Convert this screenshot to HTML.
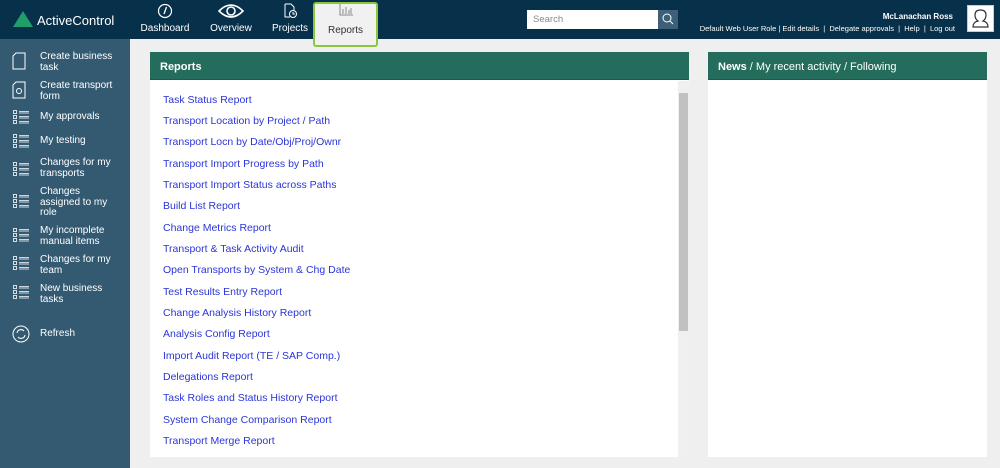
<!DOCTYPE html>
<html><head><style>
*{margin:0;padding:0;box-sizing:border-box}
body{width:1000px;height:468px;overflow:hidden;background:#efefef;font-family:"Liberation Sans",Arial,sans-serif;position:relative}
.hdr{position:absolute;left:0;top:0;width:1000px;height:39px;background:#07304a}
.logo{position:absolute;left:13px;top:11px;color:#fff;font-size:13px}
.logo span{position:absolute;left:24px;top:2px;white-space:nowrap}
.nav{position:absolute;top:0;height:39px;color:#fff;font-size:10px;text-align:center}
.nav .l{position:absolute;top:23px;left:0;right:0}
.side{position:absolute;left:0;top:39px;width:130px;height:429px;background:#345a72}
.it{position:absolute;left:40px;color:#fff;font-size:10px;line-height:10.5px;width:78px}
.ic{position:absolute;left:12px}
.panel{position:absolute;background:#fff}
.ph{height:28px;background:#246d5c;color:#fff;font-size:11px;padding:9px 10px 0;border-bottom:1px solid #1d5a4b}
.links a{position:absolute;left:13px;color:#2b35d8;font-size:10.5px;text-decoration:none;white-space:nowrap}
</style></head><body>
<div class="hdr">
<div class="logo"><svg width="20" height="16" viewBox="0 0 20 16"><polygon points="10,0 20,16 0,16" fill="#1f9e6a"/></svg><span>ActiveControl</span></div>
<div class="nav" style="left:140px;width:50px"><svg width="16" height="16" style="margin-top:3px" viewBox="0 0 16 16"><circle cx="8" cy="8" r="6.5" fill="none" stroke="#fff" stroke-width="1.2"/><path d="M9.5 4 L7 11" stroke="#fff" stroke-width="1.3"/></svg><div class="l">Dashboard</div></div>
<div class="nav" style="left:207px;width:48px"><svg width="26" height="16" style="margin-top:3px" viewBox="0 0 26 16"><path d="M1 8 Q13 -4 25 8 Q13 20 1 8Z" fill="none" stroke="#fff" stroke-width="1.6"/><circle cx="13" cy="8" r="4" fill="none" stroke="#fff" stroke-width="1.6"/></svg><div class="l">Overview</div></div>
<div class="nav" style="left:270px;width:40px"><svg width="16" height="17" style="margin-top:2px" viewBox="0 0 16 17"><path d="M3 2h6l3 3v3M3 2v13h5" fill="none" stroke="#fff" stroke-width="1"/><circle cx="11" cy="12" r="3.5" fill="none" stroke="#fff"/><path d="M11 10v2h2" stroke="#fff" fill="none"/></svg><div class="l">Projects</div></div>
<div class="nav" style="left:313px;width:65px;height:45px;top:2px;background:#f1f1f1;border:2px solid #8cc63f;border-radius:3px;color:#333"><svg width="14" height="12" viewBox="0 0 14 12"><path d="M1 0v11h13M4 10V5M7 10V3M10 10V6M12 10V4" stroke="#8a8a8a" fill="none"/></svg><div class="l" style="top:21px">Reports</div></div>
<div style="position:absolute;left:527px;top:10px;width:131px;height:19px;background:#fff;font-size:9.5px;color:#888;padding:4px 6px">Search</div>
<div style="position:absolute;left:658px;top:10px;width:20px;height:19px;background:#3d5f78"><svg width="20" height="19" viewBox="0 0 20 19"><circle cx="9" cy="8" r="4" fill="none" stroke="#fff"/><path d="M12 11l3 3" stroke="#fff"/></svg></div>
<div style="position:absolute;right:47px;top:12px;color:#fff;font-size:8px;font-weight:bold">McLanachan Ross</div>
<div style="position:absolute;right:45px;top:24px;color:#fff;font-size:7.5px;white-space:nowrap">Default Web User Role | Edit details &nbsp;| &nbsp;Delegate approvals &nbsp;| &nbsp;Help &nbsp;| &nbsp;Log out</div>
<div style="position:absolute;left:967px;top:5px;width:27px;height:27px;background:#fff;border:1px solid #ccc"><svg width="25" height="25" viewBox="0 0 25 25"><path d="M5 21q0-5 5-6q-3-2-3-6q0-5 5.5-5t5.5 5q0 4-3 6q5 1 5 6z" fill="none" stroke="#333" stroke-width="1.2"/></svg></div>
</div>
<div class="side">
<svg class="ic" style="top:13px" width="14" height="18" viewBox="0 0 14 18"><path d="M4 1h9v16H1V4z" fill="none" stroke="#fff"/></svg>
<div class="it" style="top:13px">Create business task</div>
<svg class="ic" style="top:42px" width="14" height="18" viewBox="0 0 14 18"><path d="M4 1h9v16H1V4z" fill="none" stroke="#fff"/><circle cx="7" cy="10" r="2.5" fill="none" stroke="#fff"/></svg>
<div class="it" style="top:42px">Create transport form</div>
<div class="it" style="top:73px">My approvals</div>
<div class="it" style="top:97px">My testing</div>
<div class="it" style="top:119px">Changes for my transports</div>
<div class="it" style="top:148px">Changes assigned to my role</div>
<div class="it" style="top:187px">My incomplete manual items</div>
<div class="it" style="top:216px">Changes for my team</div>
<div class="it" style="top:245px">New business tasks</div>
<svg class="ic" style="top:286px" width="18" height="18" viewBox="0 0 18 18"><circle cx="9" cy="9" r="8" fill="none" stroke="#fff"/><path d="M5 8a4 4 0 0 1 7-2M13 10a4 4 0 0 1-7 2" fill="none" stroke="#fff"/></svg>
<div class="it" style="top:290px">Refresh</div>
</div>
<svg style="position:absolute;left:13px;top:0" width="18" height="468">
<defs><g id="l" fill="none" stroke="#fff" stroke-width="0.8"><rect x="0.5" y="0.5" width="3" height="3"/><rect x="0.5" y="5.5" width="3" height="3"/><rect x="0.5" y="10.5" width="3" height="3"/><path d="M6 1.5h10M6 6.5h10M6 11.5h10M6 3h10M6 8h10M6 13h10"/></g></defs>
<use href="#l" y="110"/><use href="#l" y="134"/><use href="#l" y="162"/><use href="#l" y="194"/><use href="#l" y="228"/><use href="#l" y="256"/><use href="#l" y="285"/>
</svg>
<div class="panel" style="left:150px;top:52px;width:539px;height:405px">
<div class="ph" style="font-weight:bold">Reports</div>
<div style="position:absolute;left:528px;top:29px;width:11px;height:376px;background:#f0f0f0"><div style="position:absolute;left:1px;top:12px;width:9px;height:238px;background:#c1c1c1"></div></div>
<div class="links">
<a style="top:42px">Task Status Report</a>
<a style="top:63px">Transport Location by Project / Path</a>
<a style="top:84px">Transport Locn by Date/Obj/Proj/Ownr</a>
<a style="top:106px">Transport Import Progress by Path</a>
<a style="top:127px">Transport Import Status across Paths</a>
<a style="top:148px">Build List Report</a>
<a style="top:170px">Change Metrics Report</a>
<a style="top:191px">Transport &amp; Task Activity Audit</a>
<a style="top:212px">Open Transports by System &amp; Chg Date</a>
<a style="top:234px">Test Results Entry Report</a>
<a style="top:255px">Change Analysis History Report</a>
<a style="top:276px">Analysis Config Report</a>
<a style="top:298px">Import Audit Report (TE / SAP Comp.)</a>
<a style="top:319px">Delegations Report</a>
<a style="top:340px">Task Roles and Status History Report</a>
<a style="top:362px">System Change Comparison Report</a>
<a style="top:383px">Transport Merge Report</a>
</div></div>
<div class="panel" style="left:708px;top:52px;width:279px;height:405px">
<div class="ph"><b>News</b> / My recent activity / Following</div>
</div>
</body></html>
